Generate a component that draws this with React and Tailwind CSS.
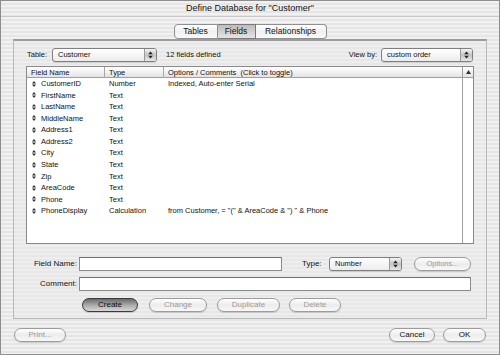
import React from "react";

const stripes =
  "bg-[repeating-linear-gradient(to_bottom,#f1f1f1_0px,#f1f1f1_2px,#e5e5e5_2px,#e5e5e5_4px)]";

function UpDown({ color = "#222" }) {
  return (
    <svg width="5" height="8" viewBox="0 0 5 8">
      <polygon points="2.5,0.5 4.8,3.3 0.2,3.3" fill={color} />
      <polygon points="2.5,7.5 4.8,4.7 0.2,4.7" fill={color} />
    </svg>
  );
}

function Handle() {
  return (
    <svg width="4" height="6" viewBox="0 0 4 6" className="shrink-0">
      <polygon points="2,0 4,2.6 0,2.6" fill="#333" />
      <polygon points="2,6 4,3.4 0,3.4" fill="#333" />
    </svg>
  );
}

function Popup({ label, w }) {
  return (
    <div
      className={`flex h-[14px] items-center rounded-[3px] border border-[#7f7f7f] bg-gradient-to-b from-white to-[#ececec] shadow-[0_1px_0_rgba(0,0,0,0.12)] ${w}`}
    >
      <span className="flex-1 truncate pl-[5px] text-[#111]">{label}</span>
      <div className="flex h-full w-[12px] items-center justify-center rounded-r-[2px] border-l border-[#9a9a9a] bg-gradient-to-b from-[#f4f4f4] via-[#c4c4c4] to-[#e8e8e8]">
        <UpDown />
      </div>
    </div>
  );
}

function AquaButton({ label, w, disabled, primary }) {
  const base =
    "flex h-[14px] items-center justify-center rounded-full border shadow-[0_1px_1px_rgba(0,0,0,0.15)]";
  if (primary) {
    return (
      <div
        className={`${base} ${w} border-[#3a3a3a] bg-gradient-to-b from-[#6a6a6a] via-[#a9a9a9] to-[#d8d8d8] text-[#0a0a0a]`}
      >
        {label}
      </div>
    );
  }
  return (
    <div
      className={`${base} ${w} border-[#9c9c9c] bg-gradient-to-b from-[#ffffff] via-[#ececec] to-[#f8f8f8] ${
        disabled ? "text-[#9a9a9a]" : "text-[#111]"
      }`}
    >
      {label}
    </div>
  );
}

const rows = [
  ["CustomerID", "Number", "Indexed, Auto-enter Serial"],
  ["FirstName", "Text", ""],
  ["LastName", "Text", ""],
  ["MiddleName", "Text", ""],
  ["Address1", "Text", ""],
  ["Address2", "Text", ""],
  ["City", "Text", ""],
  ["State", "Text", ""],
  ["Zip", "Text", ""],
  ["AreaCode", "Text", ""],
  ["Phone", "Text", ""],
  [
    "PhoneDisplay",
    "Calculation",
    'from Customer, = "(" & AreaCode & ") " & Phone',
  ],
];

export default function App() {
  return (
    <div
      className={`box-border flex h-[355px] w-[500px] flex-col overflow-hidden border border-[#8e8e8e] ${stripes} text-[7.5px] text-[#111]`}
      style={{ fontFamily: '"Liberation Sans", Arial, sans-serif' }}
    >
      {/* title bar */}
      <div className="flex h-[16px] shrink-0 items-center justify-center border-b border-[#c8c8c8] text-[9px] text-[#111]">
        Define Database for "Customer"
      </div>

      {/* tabs */}
      <div className="mt-[7px] flex h-[15px] shrink-0 justify-center text-[8.5px]">
        <div className="flex h-full w-[44px] items-center justify-center rounded-l-[4px] border border-[#8f8f8f] bg-gradient-to-b from-white via-[#f0f0f0] to-[#fafafa]">
          Tables
        </div>
        <div className="flex h-full w-[38px] items-center justify-center border-y border-r border-[#7a7a7a] bg-gradient-to-b from-[#bdbdbd] via-[#d0d0d0] to-[#e4e4e4]">
          Fields
        </div>
        <div className="flex h-full w-[71px] items-center justify-center rounded-r-[4px] border-y border-r border-[#8f8f8f] bg-gradient-to-b from-white via-[#f0f0f0] to-[#fafafa]">
          Relationships
        </div>
      </div>

      {/* group box */}
      <div className="mx-[12px] flex shrink-0 flex-col border-x border-b border-t-2 border-[#b9b9b9] border-t-[#9c9c9c] bg-[#ebebeb]/40 px-[12px] pb-[6px] pt-[7px]">
        {/* table row */}
        <div className="flex h-[14px] items-center">
          <span className="ml-[1px] w-[25px]">Table:</span>
          <Popup label="Customer" w="w-[105px]" />
          <span className="ml-[9px]">12 fields defined</span>
          <span className="ml-auto mr-[4px]">View by:</span>
          <Popup label="custom order" w="w-[92px]" />
          <div className="w-[1px]" />
        </div>

        {/* list */}
        <div className="mt-[4px] flex h-[178px] border border-[#8a8a8a] bg-white">
          <div className="flex flex-1 flex-col">
            <div className="grid h-[11px] shrink-0 grid-cols-[78px_59px_1fr] border-b border-[#a0a0a0] bg-gradient-to-b from-white via-[#f2f2f2] to-[#e2e2e2]">
              <div className="flex items-center border-r border-[#a8a8a8] pl-[4px]">
                Field Name
              </div>
              <div className="flex items-center border-r border-[#a8a8a8] pl-[4px]">
                Type
              </div>
              <div className="flex items-center pl-[4px]">
                Options / Comments&nbsp;&nbsp;(Click to toggle)
              </div>
            </div>
            {rows.map(([n, t, o]) => (
              <div
                key={n}
                className="grid h-[11.55px] shrink-0 grid-cols-[78px_59px_1fr] items-center"
              >
                <div className="flex items-center pl-[5px]">
                  <Handle />
                  <span className="ml-[5px]">{n}</span>
                </div>
                <div className="pl-[4px]">{t}</div>
                <div className="whitespace-pre pl-[4px]">{o}</div>
              </div>
            ))}
          </div>
          <div className="flex w-[11px] flex-col border-l border-[#a0a0a0]">
            <div className="flex h-[11px] items-center justify-center border-b border-[#a0a0a0] bg-gradient-to-b from-white to-[#e2e2e2]">
              <svg width="5" height="4" viewBox="0 0 5 4">
                <polygon points="2.5,0 5,4 0,4" fill="#333" />
              </svg>
            </div>
            <div className="flex-1 bg-white" />
          </div>
        </div>

        {/* field name row */}
        <div className="mt-[13px] flex h-[14px] items-center">
          <span className="w-[53px] pr-[2px] text-right text-[8px]">
            Field Name:
          </span>
          <div className="h-full w-[203px] border border-[#8c8c8c] border-t-[#6f6f6f] bg-white" />
          <span className="ml-[20px] w-[27px] text-[8px]">Type:</span>
          <Popup label="Number" w="w-[73px]" />
          <div className="ml-[12px]">
            <AquaButton label="Options..." w="w-[57px]" disabled />
          </div>
        </div>

        {/* comment row */}
        <div className="mt-[6px] flex h-[14px] items-center">
          <span className="w-[53px] pr-[2px] text-right text-[8px]">
            Comment:
          </span>
          <div className="h-full w-[392px] border border-[#8c8c8c] border-t-[#6f6f6f] bg-white" />
        </div>

        {/* buttons */}
        <div className="mt-[7px] flex h-[14px] items-center text-[8px]">
          <div className="ml-[56px]">
            <AquaButton label="Create" w="w-[56px]" primary />
          </div>
          <div className="ml-[11px]">
            <AquaButton label="Change" w="w-[58px]" disabled />
          </div>
          <div className="ml-[10px]">
            <AquaButton label="Duplicate" w="w-[63px]" disabled />
          </div>
          <div className="ml-[9px]">
            <AquaButton label="Delete" w="w-[52px]" disabled />
          </div>
        </div>
      </div>

      {/* bottom buttons */}
      <div className="mt-[9px] flex h-[14px] shrink-0 items-center px-[13px] text-[8px]">
        <AquaButton label="Print..." w="w-[52px]" disabled />
        <div className="ml-auto">
          <AquaButton label="Cancel" w="w-[46px]" />
        </div>
        <div className="ml-[8px]">
          <AquaButton label="OK" w="w-[43px]" />
        </div>
      </div>
    </div>
  );
}
